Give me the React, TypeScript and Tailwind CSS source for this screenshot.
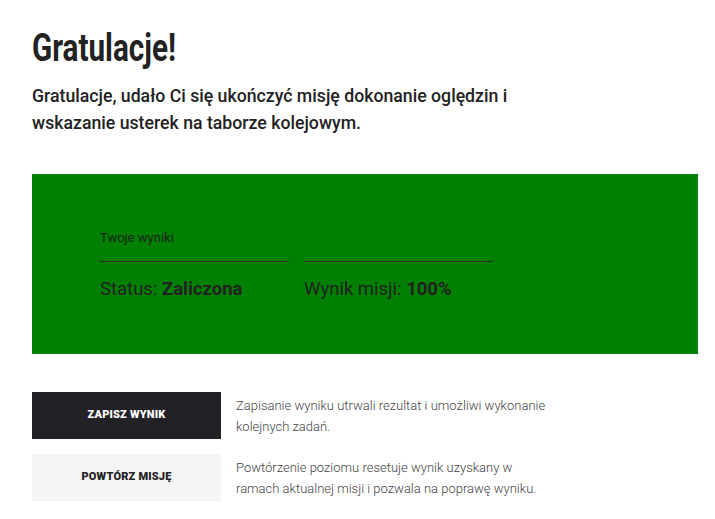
import React from "react";

const roboto = { fontFamily: "Roboto, 'Noto Sans', sans-serif" };

export default function App() {
  return (
    <div className="w-[715px] min-h-[519px] bg-white" style={roboto}>
      <div className="pl-[32px] pr-[17px] pt-[24px]">
        <h1 className="h-[48px] text-[38px] leading-[48px] font-bold text-[#222222]">
          <span className="inline-block origin-left scale-x-[0.78]">Gratulacje!</span>
        </h1>
        <p className="mt-[11px] w-[520px] text-[17.7px] leading-[27px] font-medium text-[#222222]">
          Gratulacje, udało Ci się ukończyć misję dokonanie oględzin i wskazanie usterek na taborze kolejowym.
        </p>

        <div className="mt-[37px] h-[180px] w-[666px] bg-[#008000] pl-[68px] pt-[56px]">
          <div className="text-[13px] leading-[16px] text-[#1f1f1f]">Twoje wyniki</div>
          <div className="mt-[15px] flex gap-[15px]">
            <div className="w-[189px] border-t border-[#2a2a2a] pt-[16px] text-[18.5px] leading-[22px] text-[#222222]">
              Status: <span className="font-bold">Zaliczona</span>
            </div>
            <div className="w-[189px] border-t border-[#2a2a2a] pt-[16px] text-[18.5px] leading-[22px] text-[#222222]">
              Wynik misji: <span className="font-bold">100%</span>
            </div>
          </div>
        </div>

        <div className="mt-[38px] flex flex-col gap-[15px]">
          <div className="flex gap-[15px]">
            <button className="flex h-[47px] w-[189px] items-center justify-center bg-[#222226] text-[11px] font-black uppercase tracking-[0.2px] text-white">
              Zapisz wynik
            </button>
            <p className="w-[320px] pt-[3px] text-[13px] leading-[21px] font-light text-[#444444]">
              Zapisanie wyniku utrwali rezultat i umożliwi wykonanie kolejnych zadań.
            </p>
          </div>
          <div className="flex gap-[15px]">
            <button className="flex h-[47px] w-[189px] items-center justify-center bg-[#f5f5f5] text-[11px] font-black uppercase tracking-[0.2px] text-[#222222]">
              Powtórz misję
            </button>
            <p className="w-[320px] pt-[3px] text-[13px] leading-[21px] font-light text-[#444444]">
              Powtórzenie poziomu resetuje wynik uzyskany w ramach aktualnej misji i pozwala na poprawę wyniku.
            </p>
          </div>
        </div>
      </div>
    </div>
  );
}
